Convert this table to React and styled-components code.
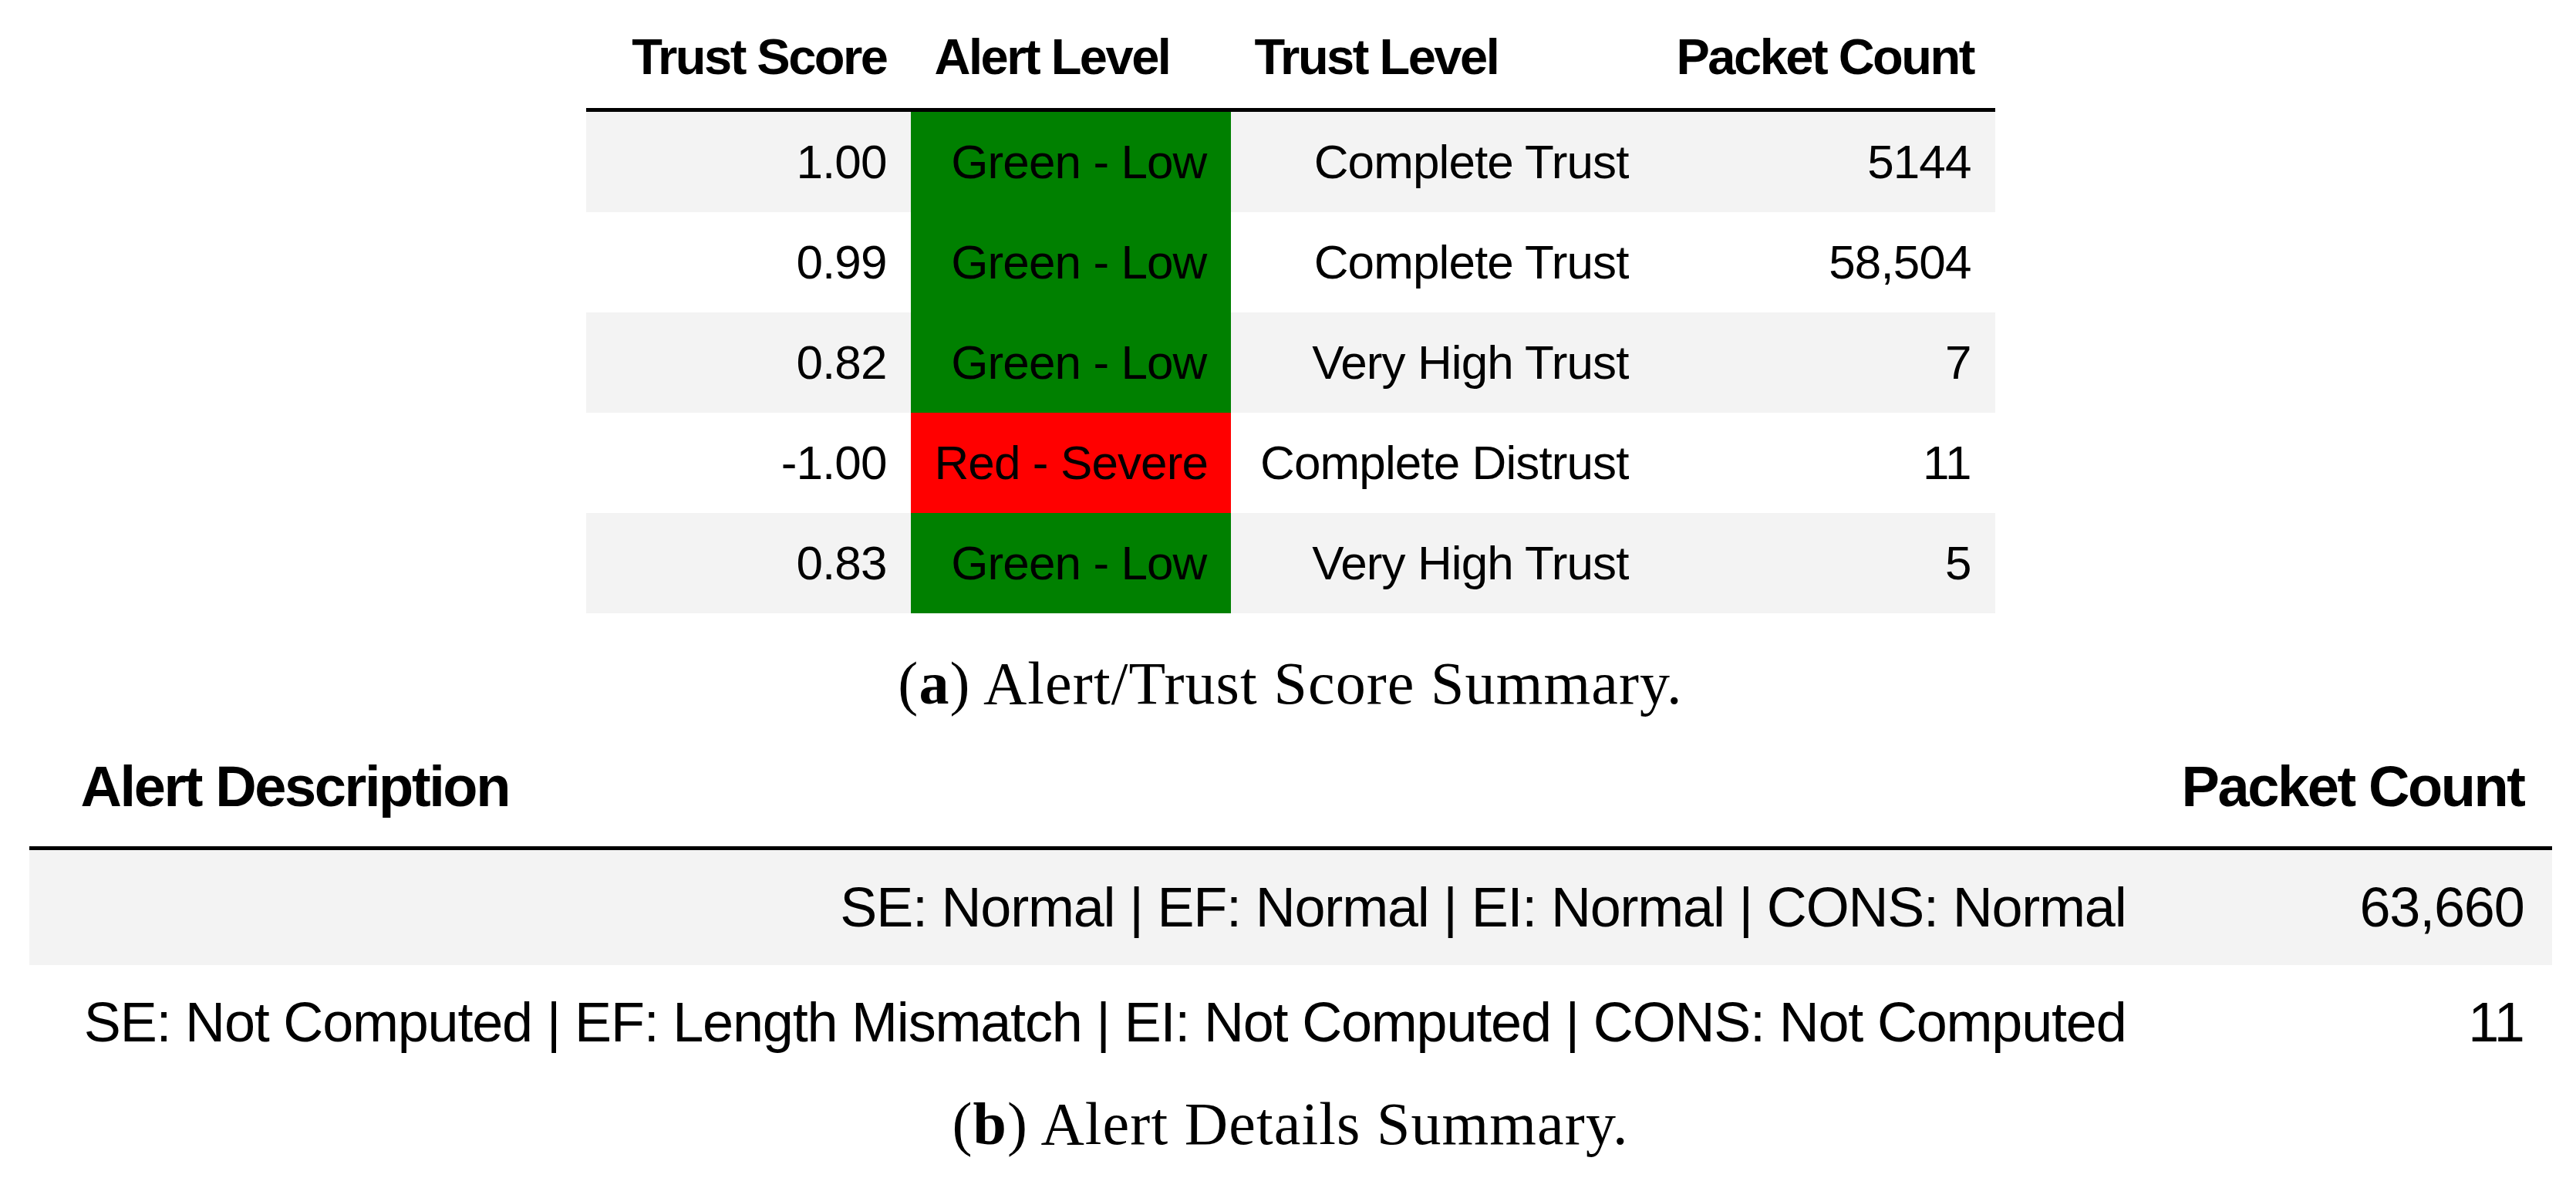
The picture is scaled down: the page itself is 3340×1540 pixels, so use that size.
import React from 'react';
import styled, { createGlobalStyle } from 'styled-components';

const GlobalStyle = createGlobalStyle`
  html, body {
    margin: 0;
    padding: 0;
    background: #fff;
  }
`;

const trustRows = [
  { score: '1.00', alert: 'Green - Low', level: 'green', trust: 'Complete Trust', count: '5144' },
  { score: '0.99', alert: 'Green - Low', level: 'green', trust: 'Complete Trust', count: '58,504' },
  { score: '0.82', alert: 'Green - Low', level: 'green', trust: 'Very High Trust', count: '7' },
  { score: '-1.00', alert: 'Red - Severe', level: 'red', trust: 'Complete Distrust', count: '11' },
  { score: '0.83', alert: 'Green - Low', level: 'green', trust: 'Very High Trust', count: '5' },
];

const detailRows = [
  { desc: 'SE: Normal | EF: Normal | EI: Normal | CONS: Normal', count: '63,660' },
  {
    desc: 'SE: Not Computed | EF: Length Mismatch | EI: Not Computed | CONS: Not Computed',
    count: '11',
  },
];

const alertColors = {
  green: '#008000',
  red: '#ff0000',
};

const App = () => {
  return (
    <Page>
      <GlobalStyle />
      <Figure>
        <Table $size="sm" style={{ width: 1827 }}>
          <colgroup>
            <col style={{ width: 27 }} />
            <col style={{ width: 394 }} />
            <col style={{ width: 415 }} />
            <col style={{ width: 547 }} />
            <col style={{ width: 444 }} />
          </colgroup>
          <thead>
            <tr>
              <Th $size="sm" $index />
              <Th $size="sm" $right>Trust Score</Th>
              <Th $size="sm">Alert Level</Th>
              <Th $size="sm">Trust Level</Th>
              <Th $size="sm">Packet Count</Th>
            </tr>
          </thead>
          <tbody>
            {trustRows.map((r, i) => (
              <Row key={i} $size="sm" $striped={i % 2 === 0}>
                <Td $size="sm" $index />
                <Td $size="sm">{r.score}</Td>
                <Td $size="sm" $bg={alertColors[r.level]}>
                  {r.alert}
                </Td>
                <Td $size="sm">{r.trust}</Td>
                <Td $size="sm">{r.count}</Td>
              </Row>
            ))}
          </tbody>
        </Table>
        <Caption $top={52}>
          (<b>a</b>) Alert/Trust Score Summary.
        </Caption>
      </Figure>

      <Figure>
        <Table $size="lg" style={{ width: 3271, marginTop: 58 }}>
          <colgroup>
            <col style={{ width: 31 }} />
            <col style={{ width: 2724 }} />
            <col style={{ width: 516 }} />
          </colgroup>
          <thead>
            <tr>
              <Th $size="lg" $index />
              <Th $size="lg">Alert Description</Th>
              <Th $size="lg">Packet Count</Th>
            </tr>
          </thead>
          <tbody>
            {detailRows.map((r, i) => (
              <Row key={i} $size="lg" $striped={i % 2 === 0}>
                <Td $size="lg" $index />
                <Td $size="lg">{r.desc}</Td>
                <Td $size="lg">{r.count}</Td>
              </Row>
            ))}
          </tbody>
        </Table>
        <Caption $top={19}>
          (<b>b</b>) Alert Details Summary.
        </Caption>
      </Figure>
    </Page>
  );
};

export default App;

const sizes = {
  sm: {
    head: 65,
    headSpacing: -2.5,
    headTop: 41,
    headBottom: 34,
    body: 62,
    bodySpacing: -0.9,
    row: 130,
    pad: 31,
    rule: 5,
  },
  lg: {
    head: 74,
    headSpacing: -2.4,
    headTop: 0,
    headBottom: 40,
    body: 72,
    bodySpacing: -1.2,
    row: 148.5,
    pad: 36,
    rule: 5,
  },
};

const Page = styled.div`
  display: flex;
  flex-direction: column;
  align-items: center;
  width: 3340px;
  height: 1540px;
  padding-left: 6px;
  box-sizing: border-box;
  font-family: 'Liberation Sans', Arial, sans-serif;
  color: #000;
`;

const Figure = styled.div`
  display: flex;
  flex-direction: column;
  align-items: center;
`;

const Table = styled.table`
  table-layout: fixed;
  border-collapse: separate;
  border-spacing: 0;
`;

const Th = styled.th`
  font-size: ${p => sizes[p.$size].head}px;
  letter-spacing: ${p => sizes[p.$size].headSpacing}px;
  font-weight: 700;
  line-height: 1;
  white-space: nowrap;
  text-align: ${p => (p.$right ? 'right' : 'left')};
  vertical-align: bottom;
  padding: ${p => sizes[p.$size].headTop}px
    ${p => (p.$index ? 0 : sizes[p.$size].pad)}px
    ${p => sizes[p.$size].headBottom}px;
  border-bottom: ${p => sizes[p.$size].rule}px solid #000;
`;

const Row = styled.tr`
  height: ${p => sizes[p.$size].row}px;
  background: ${p => (p.$striped ? '#f3f3f3' : '#fff')};
`;

const Td = styled.td`
  font-size: ${p => sizes[p.$size].body}px;
  letter-spacing: ${p => sizes[p.$size].bodySpacing}px;
  line-height: ${p => sizes[p.$size].row}px;
  white-space: nowrap;
  text-align: right;
  padding: 0 ${p => (p.$index ? 0 : sizes[p.$size].pad)}px;
  background: ${p => p.$bg || 'transparent'};
`;

const Caption = styled.div`
  margin-top: ${p => p.$top}px;
  font-family: 'Liberation Serif', 'Times New Roman', serif;
  font-size: 78px;
  line-height: 1;
  letter-spacing: 1.1px;
  white-space: nowrap;

  b {
    font-weight: 700;
  }
`;
